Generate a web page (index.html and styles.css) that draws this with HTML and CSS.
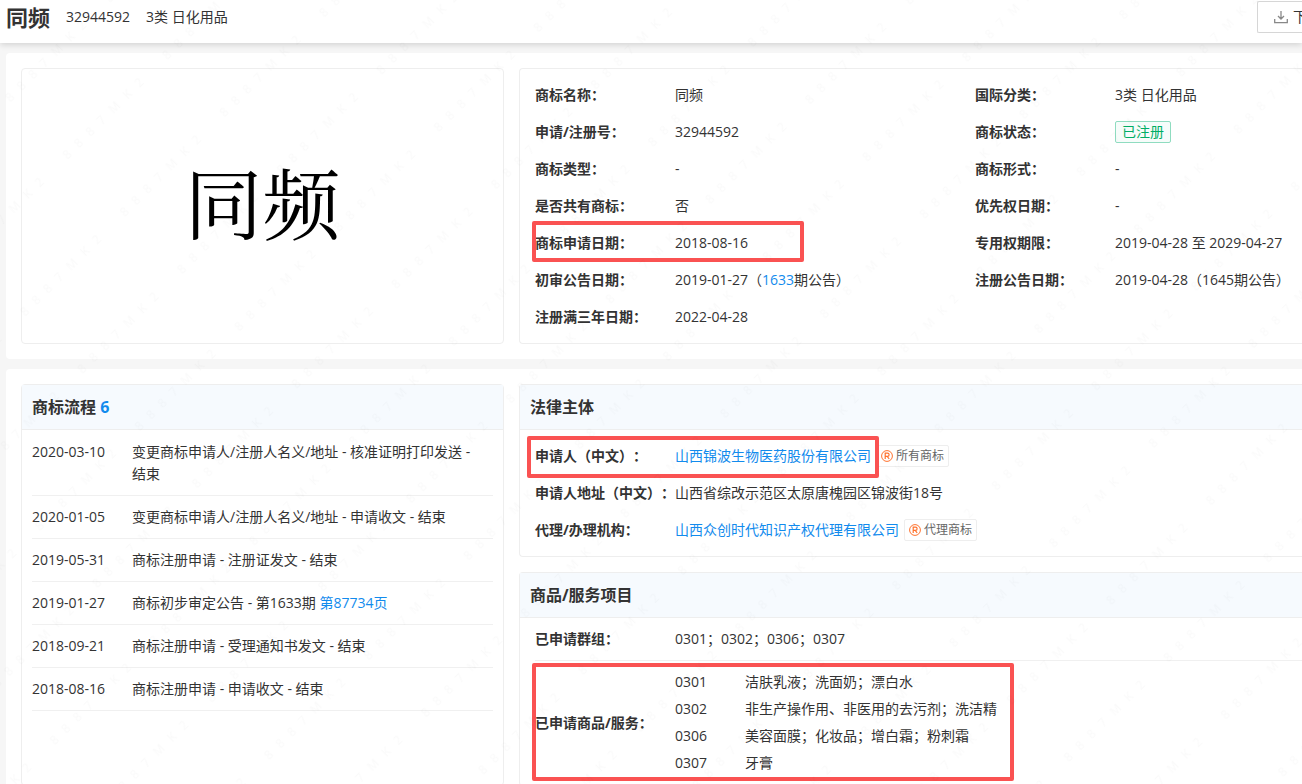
FILE: index.html
```html
<!DOCTYPE html>
<html lang="zh-CN">
<head>
  <meta charset="UTF-8">
  <title>同频 - 商标详情</title>
  <meta name="viewport" content="width=device-width, initial-scale=1.0">
  <link rel="stylesheet" href="styles.css">
</head>
<body>

<header class="top-bar">
  <h1>同频</h1>
  <span>32944592</span>
  <span>3类 日化用品</span>
  <button class="download-btn" type="button">
    <svg width="14" height="14" viewBox="0 0 14 14" fill="none" stroke="#888" stroke-width="1.3" aria-hidden="true">
      <path d="M7 1v8M4 6l3 3 3-3M.7 9v3.6h12.6V9"/>
    </svg>
    下载
  </button>
</header>

<main>
  <section class="panel">
    <div class="card logo-card">同频</div>
    <div class="card cut-card">
      <dl class="fields two-cols">
        <div class="field"><dt>商标名称：</dt><dd>同频</dd></div>
        <div class="field"><dt>国际分类：</dt><dd>3类 日化用品</dd></div>
        <div class="field"><dt>申请/注册号：</dt><dd>32944592</dd></div>
        <div class="field"><dt>商标状态：</dt><dd><span class="status">已注册</span></dd></div>
        <div class="field"><dt>商标类型：</dt><dd>-</dd></div>
        <div class="field"><dt>商标形式：</dt><dd>-</dd></div>
        <div class="field"><dt>是否共有商标：</dt><dd>否</dd></div>
        <div class="field"><dt>优先权日期：</dt><dd>-</dd></div>
        <div class="field mark mark-date"><dt>商标申请日期：</dt><dd>2018-08-16</dd></div>
        <div class="field"><dt>专用权期限：</dt><dd>2019-04-28 至 2029-04-27</dd></div>
        <div class="field"><dt>初审公告日期：</dt><dd>2019-01-27（<a href="#">1633</a>期公告）</dd></div>
        <div class="field"><dt>注册公告日期：</dt><dd>2019-04-28（1645期公告）</dd></div>
        <div class="field"><dt>注册满三年日期：</dt><dd>2022-04-28</dd></div>
      </dl>
    </div>
  </section>

  <section class="panel">
    <div class="card">
      <h2>商标流程 <em>6</em></h2>
      <ul class="flow">
        <li><time>2020-03-10</time><p>变更商标申请人/注册人名义/地址 - 核准证明打印发送 - 结束</p></li>
        <li><time>2020-01-05</time><p>变更商标申请人/注册人名义/地址 - 申请收文 - 结束</p></li>
        <li><time>2019-05-31</time><p>商标注册申请 - 注册证发文 - 结束</p></li>
        <li><time>2019-01-27</time><p>商标初步审定公告 - 第1633期 <a href="#">第87734页</a></p></li>
        <li><time>2018-09-21</time><p>商标注册申请 - 受理通知书发文 - 结束</p></li>
        <li><time>2018-08-16</time><p>商标注册申请 - 申请收文 - 结束</p></li>
      </ul>
    </div>

    <div class="stack">
      <div class="card cut-card">
        <h2>法律主体</h2>
        <dl class="fields">
          <div class="field mark mark-owner">
            <dt>申请人（中文）：</dt>
            <dd>
              <a href="#">山西锦波生物医药股份有限公司</a>
              <a class="tag" href="#">
                <svg width="12" height="12" viewBox="0 0 12 12" fill="none" stroke="#ff722d" aria-hidden="true">
                  <circle cx="6" cy="6" r="5.4"/>
                  <path d="M4.2 9V3.2h2.3a1.6 1.6 0 0 1 0 3.2H4.2M6.2 6.4L8.2 9" stroke-width="1.2"/>
                </svg>所有商标</a>
            </dd>
          </div>
          <div class="field"><dt>申请人地址（中文）：</dt><dd>山西省综改示范区太原唐槐园区锦波街18号</dd></div>
          <div class="field">
            <dt>代理/办理机构：</dt>
            <dd>
              <a href="#">山西众创时代知识产权代理有限公司</a>
              <a class="tag" href="#">
                <svg width="12" height="12" viewBox="0 0 12 12" fill="none" stroke="#ff722d" aria-hidden="true">
                  <circle cx="6" cy="6" r="5.4"/>
                  <path d="M4.2 9V3.2h2.3a1.6 1.6 0 0 1 0 3.2H4.2M6.2 6.4L8.2 9" stroke-width="1.2"/>
                </svg>代理商标</a>
            </dd>
          </div>
        </dl>
      </div>

      <div class="card cut-card">
        <h2>商品/服务项目</h2>
        <dl class="goods">
          <div class="field groups"><dt>已申请群组：</dt><dd>0301；0302；0306；0307</dd></div>
          <div class="field mark mark-goods">
            <dt>已申请商品/服务：</dt>
            <dd>
              <ul class="goods-list">
                <li><span>0301</span>洁肤乳液；洗面奶；漂白水</li>
                <li><span>0302</span>非生产操作用、非医用的去污剂；洗洁精</li>
                <li><span>0306</span>美容面膜；化妆品；增白霜；粉刺霜</li>
                <li><span>0307</span>牙膏</li>
              </ul>
            </dd>
          </div>
        </dl>
      </div>
    </div>
  </section>
</main>

<!-- watermark -->
<svg class="watermark" aria-hidden="true">
  <defs>
    <pattern id="wm" x="60" y="35" width="141" height="81" patternUnits="userSpaceOnUse" patternTransform="rotate(-45)">
      <text x="70" y="45" text-anchor="middle">8&#160;&#160;&#160;8&#160;&#160;&#160;8&#160;&#160;&#160;7&#160;&#160;&#160;M&#160;&#160;&#160;K&#160;&#160;&#160;2</text>
    </pattern>
  </defs>
  <rect width="100%" height="100%" fill="url(#wm)"/>
</svg>

</body>
</html>
```

FILE: styles.css
```css
*, *::after {
  box-sizing: border-box;
  margin: 0;
  padding: 0;
}
body {
  font-family: "Open Sans", "Noto Sans CJK SC", sans-serif;
  font-size: 14px;
  line-height: 22px;
  color: #333;
  background-color: #f6f6f6;
  text-spacing-trim: space-all;
  height: 100vh;
  overflow: hidden;
}
a {
  color: #128bed;
  text-decoration: none;
}
ul {
  list-style: none;
}

/* header */
.top-bar {
  display: flex;
  align-items: center;
  gap: 16px;
  padding: 1px 0 10px 6px;
  background-color: #fff;
  box-shadow: 0 2px 6px rgba(0,0,0,0.14);
}
.top-bar h1 {
  font-size: 22px;
  line-height: 32px;
}
.download-btn {
  display: flex;
  align-items: center;
  gap: 5px;
  width: 45px;
  height: 32px;
  margin-left: auto;
  padding-left: 16px;
  border: 1px solid #d6d6d6;
  border-right: none;
  border-radius: 2px 0 0 2px;
  background-color: #fff;
  color: #333;
  font: inherit;
  white-space: nowrap;
  overflow: hidden;
  cursor: pointer;
}
.download-btn svg {
  flex-shrink: 0;
}

/* panels and cards */
.panel {
  display: grid;
  grid-template-columns: 483px 1fr;
  gap: 15px;
  margin: 10px 0 0 6px;
  padding: 15px 0 15px 15px;
  background-color: #fff;
  border-radius: 4px 0 0 4px;
}
.card {
  border: 1px solid #eee;
  border-radius: 4px;
}
.cut-card {
  border-right: none;
  border-radius: 4px 0 0 4px;
}
.card h2 {
  padding: 11px 10px;
  background-color: #f6fafe;
  border-bottom: 1px solid #eee;
  font-size: 16px;
}
.card h2 em {
  color: #128bed;
  font-style: normal;
}
.stack {
  display: flex;
  flex-direction: column;
  gap: 15px;
}
.logo-card {
  display: flex;
  align-items: center;
  justify-content: center;
  padding-bottom: 12px;
  font-family: "Noto Serif CJK SC", "Noto Sans CJK SC", serif;
  font-size: 78px;
  line-height: 80px;
  color: #000;
}

/* label / value rows */
.fields {
  padding: 7px 0 8px 15px;
}
.two-cols {
  display: grid;
  grid-template-columns: 440px 1fr;
}
.field {
  display: flex;
  align-items: center;
  min-height: 37px;
  white-space: nowrap;
}
.field dt {
  flex: 0 0 140px;
  font-weight: bold;
}
.field dd {
  display: flex;
  align-items: center;
}
.status {
  padding: 0 6px;
  border: 1px solid #8fdcc0;
  border-radius: 2px;
  background-color: #f6fcfa;
  color: #00ad65;
  line-height: 20px;
}
.tag {
  display: flex;
  align-items: center;
  gap: 3px;
  margin-left: 5px;
  padding: 0 4px;
  border: 1px solid #eee;
  border-radius: 2px;
  color: #666;
  font-size: 12px;
  line-height: 20px;
}

/* flow list */
.flow {
  padding: 1px 10px 0;
}
.flow li {
  display: flex;
  padding: 10px 0;
  border-bottom: 1px solid #f0f0f0;
}
.flow time {
  flex: 0 0 100px;
}
.flow p {
  word-break: keep-all;
}

/* goods */
.goods {
  padding-left: 15px;
}
.goods .groups {
  min-height: 43px;
  border-bottom: 1px solid #f0f0f0;
}
.goods-list {
  padding: 7px 0 9px;
  line-height: 27px;
}
.goods-list li {
  display: flex;
}
.goods-list span {
  flex: 0 0 70px;
}

/* red frames over the rows */
.mark {
  position: relative;
}
.mark::after {
  content: "";
  position: absolute;
  border: 4px solid #fa5252;
  border-radius: 2px;
}
.mark-date::after {
  top: -3px;
  left: -3px;
  width: 272px;
  height: 41px;
}
.mark-owner::after {
  top: -1px;
  left: -8px;
  width: 352px;
  height: 42px;
}
.mark-goods::after {
  top: 2px;
  left: -3px;
  width: 482px;
  height: 118px;
}

.watermark {
  position: fixed;
  top: 0;
  left: 0;
  width: 100%;
  height: 100%;
  pointer-events: none;
}
.watermark text {
  font-size: 12px;
  fill: #000;
  fill-opacity: 0.02;
}
```
